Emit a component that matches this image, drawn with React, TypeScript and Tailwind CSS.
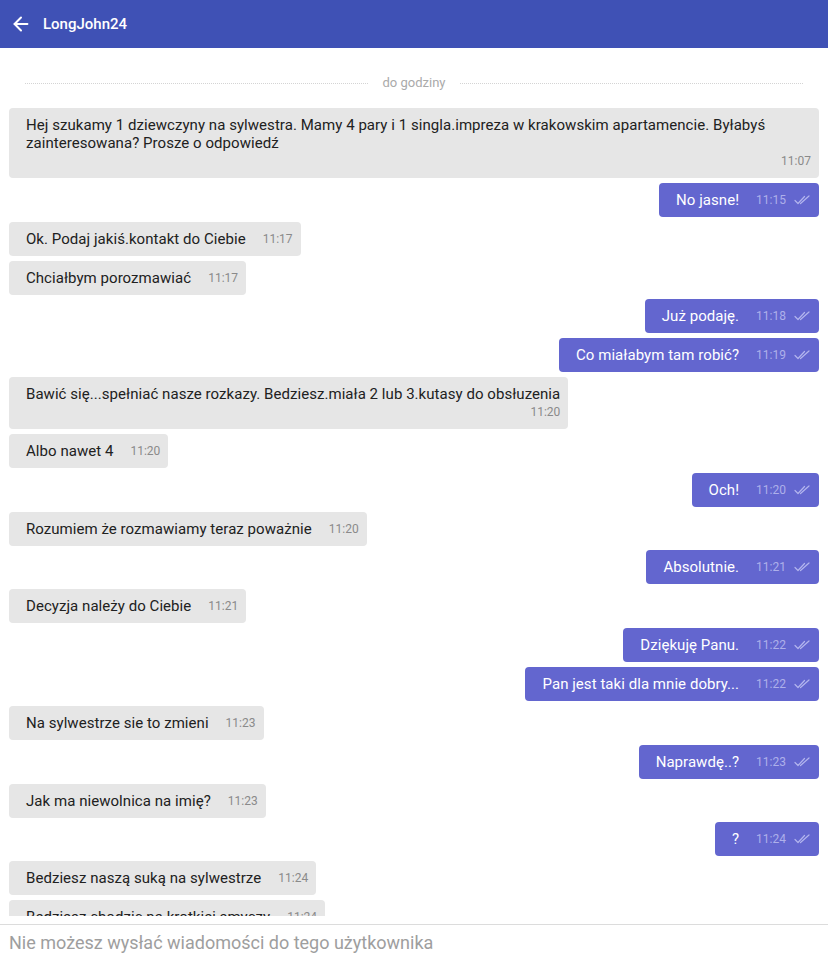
import { ArrowLeft } from 'lucide-react'

type Msg = { text: string; time: string; mine?: boolean; multi?: boolean }

const MESSAGES: Msg[] = [
  {
    text: 'Hej szukamy 1 dziewczyny na sylwestra. Mamy 4 pary i 1 singla.impreza w krakowskim apartamencie. Byłabyś zainteresowana? Prosze o odpowiedź',
    time: '11:07',
    multi: true,
  },
  { text: 'No jasne!', time: '11:15', mine: true },
  { text: 'Ok. Podaj jakiś.kontakt do Ciebie', time: '11:17' },
  { text: 'Chciałbym porozmawiać', time: '11:17' },
  { text: 'Już podaję.', time: '11:18', mine: true },
  { text: 'Co miałabym tam robić?', time: '11:19', mine: true },
  {
    text: 'Bawić się...spełniać nasze rozkazy. Bedziesz.miała 2 lub 3.kutasy do obsłuzenia',
    time: '11:20',
    multi: true,
  },
  { text: 'Albo nawet 4', time: '11:20' },
  { text: 'Och!', time: '11:20', mine: true },
  { text: 'Rozumiem że rozmawiamy teraz poważnie', time: '11:20' },
  { text: 'Absolutnie.', time: '11:21', mine: true },
  { text: 'Decyzja należy do Ciebie', time: '11:21' },
  { text: 'Dziękuję Panu.', time: '11:22', mine: true },
  { text: 'Pan jest taki dla mnie dobry...', time: '11:22', mine: true },
  { text: 'Na sylwestrze sie to zmieni', time: '11:23' },
  { text: 'Naprawdę..?', time: '11:23', mine: true },
  { text: 'Jak ma niewolnica na imię?', time: '11:23' },
  { text: '?', time: '11:24', mine: true },
  { text: 'Bedziesz naszą suką na sylwestrze', time: '11:24' },
  { text: 'Bedziesz chodzic na krotkiej smyczy', time: '11:24' },
]

const DoubleCheck = () => (
  <svg width="16" height="10" viewBox="0 0 16 10" fill="none" className="ml-2 shrink-0">
    <path d="M1 5.5 L4 8.5 L10.5 1.5" stroke="#b3b5ee" strokeWidth="1.2" strokeLinecap="round" strokeLinejoin="round" />
    <path d="M6.5 8.5 L15 1" stroke="#b3b5ee" strokeWidth="1.2" strokeLinecap="round" />
  </svg>
)

const Bubble = ({ msg }: { msg: Msg }) => {
  const base = msg.mine
    ? 'bg-[#6366cf] text-white'
    : 'bg-[#e6e6e6] text-[#212121]'
  const timeColor = msg.mine ? 'text-[#aeb0ea]' : 'text-[#8a8a8a]'

  if (msg.multi) {
    return (
      <div className={`flex ${msg.mine ? 'justify-end' : 'justify-start'}`}>
        <div className={`${base} rounded-[4px] pt-2 pb-2 pl-[17px] pr-2`}>
          <p className="text-[15px] leading-[18px] tracking-[0.05px]">{msg.text}</p>
          <div className={`text-right text-[12px] leading-[18px] ${timeColor}`}>
            {msg.time}
          </div>
        </div>
      </div>
    )
  }

  return (
    <div className={`flex ${msg.mine ? 'justify-end' : 'justify-start'}`}>
      <div
        className={`${base} flex h-[34px] items-center whitespace-nowrap rounded-[4px] pl-[17px] ${
          msg.mine ? 'pr-[9px]' : 'pr-2'
        }`}
      >
        <span className="text-[15px] leading-[18px] tracking-[0.05px]">{msg.text}</span>
        <span className={`ml-[17px] text-[12px] ${timeColor}`}>{msg.time}</span>
        {msg.mine && <DoubleCheck />}
      </div>
    </div>
  )
}

export default function App() {
  return (
    <div
      className="flex h-[960px] w-[828px] flex-col overflow-hidden bg-white"
      style={{ fontFamily: 'Roboto, "Liberation Sans", sans-serif' }}
    >
      <header className="flex h-[48px] shrink-0 items-center bg-[#3f51b5] pl-[10px] text-white">
        <ArrowLeft size={22} strokeWidth={2.2} />
        <span className="ml-[11px] text-[15px] font-medium">LongJohn24</span>
      </header>

      <main className="flex min-h-0 flex-1 flex-col pb-2">
        <div className="min-h-0 flex-1 overflow-hidden px-[9px]">
          <div className="flex items-center px-4 pt-[27px] pb-[17px]">
            <div className="flex-1 border-t border-dotted border-[#d4d4d4]" />
            <span className="px-[15px] text-[13px] leading-[16px] text-[#aaaaaa]">do godziny</span>
            <div className="flex-1 border-t border-dotted border-[#d4d4d4]" />
          </div>
          <div className="flex flex-col gap-[4.85px]">
            {MESSAGES.map((m, i) => (
              <Bubble key={i} msg={m} />
            ))}
          </div>
        </div>
      </main>

      <footer className="flex h-[36px] shrink-0 items-center border-t border-[#dcdcdc] px-[9px]">
        <span className="text-[18px] text-[#9e9e9e]">Nie możesz wysłać wiadomości do tego użytkownika</span>
      </footer>
    </div>
  )
}
